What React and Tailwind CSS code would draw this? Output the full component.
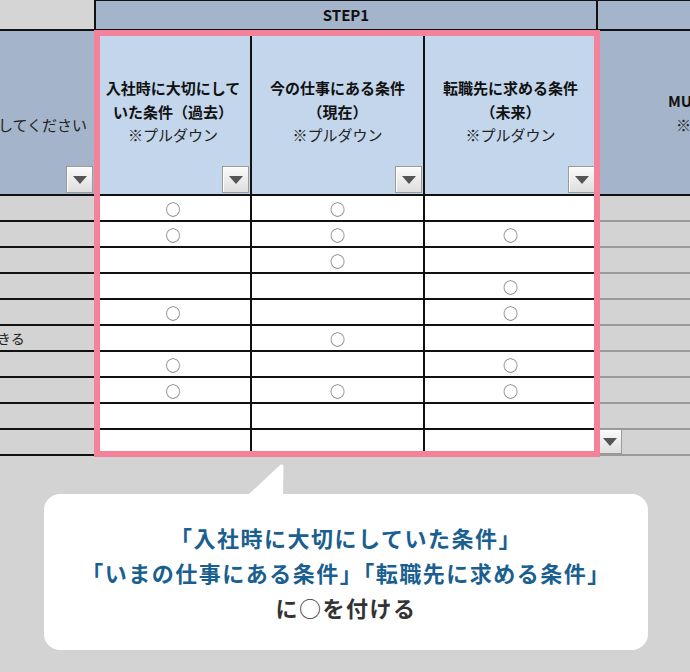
import React from "react";

const rows = [
  [1, 1, 0],
  [1, 1, 1],
  [0, 1, 0],
  [0, 0, 1],
  [1, 0, 1],
  [0, 1, 0],
  [1, 0, 1],
  [1, 1, 1],
  [0, 0, 0],
  [0, 0, 0],
];

function DropBtn({ className = "" }) {
  return (
    <div
      className={
        "absolute flex items-center justify-center w-[27px] h-[27px] border border-[#9a9a9a] bg-gradient-to-b from-[#fbfbfb] to-[#dedede] shadow-[inset_1px_1px_0_#ffffff] " +
        className
      }
    >
      <svg width="14" height="8" viewBox="0 0 14 8">
        <polygon points="0,0 14,0 7,8" fill="#555555" />
      </svg>
    </div>
  );
}

function HeadCell({ l1, l2 }) {
  return (
    <div className="relative h-[165px] bg-[#c3d6ec] border-r-2 border-b-2 border-[#111] flex items-center justify-center">
      <div className="text-center text-[15px] leading-[23.5px] text-[#111] -mt-[2px]">
        <div className="font-bold">{l1}</div>
        <div className="font-bold">{l2}</div>
        <div className="font-normal text-[#222]">※プルダウン</div>
      </div>
      <DropBtn className="right-[1px] bottom-[1px]" />
    </div>
  );
}

export default function App() {
  return (
    <div className="relative w-[690px] h-[672px] bg-[#d3d3d3] overflow-hidden font-['Noto_Sans_CJK_JP','Noto_Sans',sans-serif]">
      {/* spreadsheet */}
      <div className="relative">
        <div className="grid grid-cols-[96px_156px_173px_173px_92px]">
          {/* row 0 */}
          <div className="h-[31px] bg-[#d5d5d5] border-r-2 border-b-2 border-[#111]" />
          <div className="col-span-3 h-[31px] bg-[#a4b4ca] border-t border-r-2 border-b-2 border-[#111] flex items-center justify-center text-[15px] font-bold text-[#111]">
            STEP1
          </div>
          <div className="h-[31px] bg-[#a4b4ca] border-t border-b-2 border-[#111]" />

          {/* header row */}
          <div className="relative h-[165px] bg-[#a4b4ca] border-r-2 border-b-2 border-[#111] overflow-hidden flex items-center justify-end pr-[7px]">
            <span className="whitespace-nowrap text-[15px] text-[#222] mt-[26px]">
              してください
            </span>
            <DropBtn className="right-[1px] bottom-[1px]" />
          </div>
          <HeadCell l1="入社時に大切にして" l2="いた条件（過去）" />
          <HeadCell l1="今の仕事にある条件" l2="（現在）" />
          <HeadCell l1="転職先に求める条件" l2="（未来）" />
          <div className="relative h-[165px] bg-[#a4b4ca] border-b-2 border-[#111] overflow-hidden">
            <div className="absolute left-[70px] top-[58px] whitespace-nowrap text-[15px] leading-[23.5px] text-[#111]">
              <div className="font-bold">MUST条件</div>
              <div className="pl-[8px] text-[#222]">※プルダウン</div>
            </div>
          </div>

          {/* data rows */}
          {rows.map((r, i) => (
            <React.Fragment key={i}>
              <div className="h-[26px] bg-[#d3d3d3] border-r-2 border-b-2 border-[#111] overflow-hidden flex items-center text-[14px] text-[#222] whitespace-nowrap">
                {i === 5 ? <span className="-ml-[3px]">きる</span> : null}
              </div>
              {r.map((v, j) => (
                <div
                  key={j}
                  className="h-[26px] bg-white border-r-2 border-b-2 border-[#111] flex items-center justify-center text-[15px] leading-none text-[#555]"
                >
                  {v ? "○" : ""}
                </div>
              ))}
              <div className="relative h-[26px] bg-[#d3d3d3] border-b-2 border-[#9a9a9a]">
                {i === 9 ? (
                  <DropBtn className="left-0 top-[-1px] !w-[24px] !h-[25px]" />
                ) : null}
              </div>
            </React.Fragment>
          ))}
        </div>

        {/* highlight frame */}
        <div className="absolute left-[94px] top-[30px] w-[506px] h-[427px] border-[6px] border-[#f4829a] pointer-events-none" />
      </div>

      {/* speech bubble */}
      <div className="relative ml-[44px] mt-[38px] w-[604px] h-[156px] rounded-[16px] bg-white flex items-center justify-center">
        <svg
          className="absolute left-[203px] top-[-32px]"
          width="40"
          height="36"
          viewBox="0 0 40 36"
        >
          <path d="M0 34 L32 4 Q36 0 36.5 5 L36 34 Z" fill="#ffffff" />
        </svg>
        <div className="text-center text-[22px] leading-[35px] font-bold tracking-[1.5px]">
          <div className="text-[#1a5f8f]">「入社時に大切にしていた条件」</div>
          <div className="text-[#1a5f8f]">「いまの仕事にある条件」「転職先に求める条件」</div>
          <div className="text-[#333333]">
            に<span className="font-normal">○</span>を付ける
          </div>
        </div>
      </div>
    </div>
  );
}
